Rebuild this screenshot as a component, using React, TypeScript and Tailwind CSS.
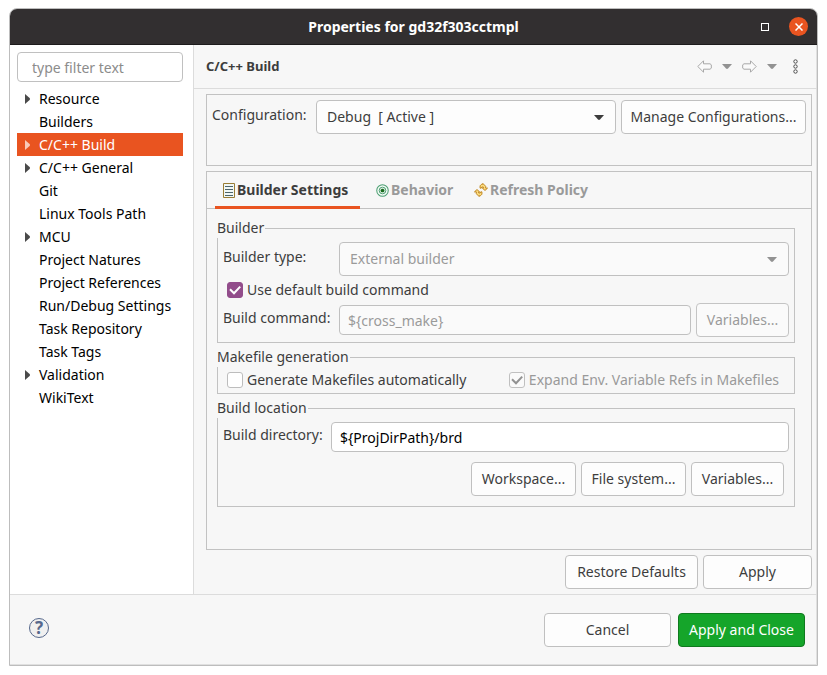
import { useState, type ReactNode } from 'react';
import { clsx } from 'clsx';

const pages = [
  { name: 'Resource', nested: true },
  { name: 'Builders' },
  { name: 'C/C++ Build', nested: true },
  { name: 'C/C++ General', nested: true },
  { name: 'Git' },
  { name: 'Linux Tools Path' },
  { name: 'MCU', nested: true },
  { name: 'Project Natures' },
  { name: 'Project References' },
  { name: 'Run/Debug Settings' },
  { name: 'Task Repository' },
  { name: 'Task Tags' },
  { name: 'Validation', nested: true },
  { name: 'WikiText' },
];

function Caret({ className }: { className?: string }) {
  return (
    <svg viewBox="0 0 10 5" className={clsx('h-[5px] w-[10px]', className)} fill="currentColor" aria-hidden="true">
      <path d="M0 0h10L6 4.6Q5 5.4 4 4.6z" />
    </svg>
  );
}

function Arrow({ forward }: { forward?: boolean }) {
  return (
    <svg viewBox="0 0 15 13" className={clsx('h-[13px] w-[15px]', forward && '-scale-x-100')} fill="#fafafa" stroke="#a8a8a8" aria-hidden="true">
      <path d="M.8 6.5 6.5.8v3H13l1.3 1v3.4l-1.3 1H6.5v3z" />
    </svg>
  );
}

function Button({ children, className, disabled }: { children: ReactNode; className?: string; disabled?: boolean }) {
  return (
    <button
      type="button"
      disabled={disabled}
      className={clsx(
        'h-[34px] shrink-0 rounded-[4px] border text-center whitespace-nowrap',
        disabled ? 'border-[#c4c4c4] bg-[#fafafa] text-[#9a9a9a]' : 'border-[#c0c0c0] bg-[#fdfdfd]',
        className,
      )}
    >
      {children}
    </button>
  );
}

function Combo({ id, value, disabled }: { id: string; value: string; disabled?: boolean }) {
  return (
    <div className="relative min-w-0 flex-1">
      <select
        id={id}
        disabled={disabled}
        className={clsx(
          'h-[34px] w-full appearance-none rounded-[4px] border border-[#c0c0c0] px-[10px] opacity-100',
          disabled ? 'bg-[#fafafa] text-[#9a9a9a]' : 'bg-[#fdfdfd] text-[#3d3d3d]',
        )}
      >
        <option>{value}</option>
      </select>
      <Caret className={clsx('pointer-events-none absolute top-[15px] right-3', disabled ? 'text-[#929292]' : 'text-[#3d3d3d]')} />
    </div>
  );
}

function Check({ label, initial = false, disabled }: { label: string; initial?: boolean; disabled?: boolean }) {
  const [on, setOn] = useState(initial);
  return (
    <label className={clsx('flex items-center gap-1 whitespace-nowrap', disabled && 'text-[#9a9a9a]')}>
      <span className="relative h-4 w-4 shrink-0">
        <input
          type="checkbox"
          checked={on}
          disabled={disabled}
          onChange={(e) => setOn(e.target.checked)}
          className={clsx(
            'block h-4 w-4 appearance-none rounded-[3px] border',
            disabled ? 'border-[#c0c0c0] bg-[#fafafa]' : on ? 'border-[#924d8b] bg-[#924d8b]' : 'border-[#bdbdbd] bg-white',
          )}
        />
        {on && (
          <svg viewBox="0 0 16 16" className={clsx('pointer-events-none absolute inset-0', disabled ? 'text-[#929292]' : 'text-white')} fill="none" stroke="currentColor" strokeWidth="2" aria-hidden="true">
            <path d="m3 7.2 4 4 6.2-6.6" />
          </svg>
        )}
      </span>
      {label}
    </label>
  );
}

function Group({ title, className, children }: { title: string; className?: string; children: ReactNode }) {
  return (
    <fieldset className={clsx('min-w-0 border border-[#c2c2c2] px-[5px]', className)}>
      <legend className="-ml-[6px] h-5 bg-[#f7f7f7] pr-px leading-5">{title}</legend>
      {children}
    </fieldset>
  );
}

function ListIcon() {
  return (
    <svg viewBox="0 0 12 15" className="h-[15px] w-3" aria-hidden="true">
      <path d="M.5.5h11v14H.5z" fill="#f1f7f5" stroke="#9a7d35" />
      <path d="M2 3.5h8M2 6.5h8M2 9.5h8M2 12.5h8" stroke="#4d646b" strokeWidth="1.2" />
    </svg>
  );
}

function TargetIcon() {
  return (
    <svg viewBox="0 0 14 14" className="h-[13px] w-[13px]" aria-hidden="true">
      <circle cx="7" cy="7" r="6.2" fill="#f2faf5" stroke="#4c9e72" strokeWidth="1.1" />
      <circle cx="7" cy="7" r="3.6" fill="#d8eadc" stroke="#4c9e72" />
      <circle cx="7" cy="7" r="2" fill="#176b1c" />
    </svg>
  );
}

function RefreshIcon() {
  return (
    <svg viewBox="0 0 15 15" className="h-[14px] w-[14px]" fill="#fbdc80" stroke="#bd8118" strokeLinejoin="round" aria-hidden="true">
      <path d="M6.5 5.5V3l1.7-1.7h1.3V.5l3 3v2h2L11.8 8 9 5.5h1V4.3H8.5L7.8 5.5z" />
      <path d="M6.5 5.5V3l1.7-1.7h1.3V.5l3 3v2h2L11.8 8 9 5.5h1V4.3H8.5L7.8 5.5z" transform="rotate(180 7.5 7.5)" />
    </svg>
  );
}

const tabs = [
  { name: 'Builder Settings', icon: <ListIcon />, width: 'w-[145px]' },
  { name: 'Behavior', icon: <TargetIcon />, width: 'w-[90px]' },
  { name: 'Refresh Policy', icon: <RefreshIcon />, width: 'w-[131px]' },
];

export default function App() {
  const [page, setPage] = useState('C/C++ Build');
  return (
    <div className="flex min-h-screen bg-white pt-2 pr-[9px] pb-[9px] pl-[9px] font-['Noto_Sans','Open_Sans',sans-serif] text-[14px] leading-5 text-[#3d3d3d]">
      <div className="flex min-w-0 flex-1 flex-col overflow-hidden rounded-t-[8px] border border-[#bdbdbd] bg-[#f7f7f7] shadow-[inset_-1px_-1px_0_#e0e0e0]">
        <header className="grid h-9 shrink-0 grid-cols-[1fr_auto_1fr] items-center border-b border-[#1d1b1c] bg-[#322f30] text-white">
          <h1 className="col-start-2 font-bold">Properties for gd32f303cctmpl</h1>
          <div className="flex items-center justify-end gap-5 pr-[9px]">
            <button type="button" aria-label="Maximize" className="h-2 w-2 border border-white" />
            <button type="button" aria-label="Close" className="flex h-[19px] w-[19px] items-center justify-center rounded-full bg-[#e95420]">
              <svg viewBox="0 0 8 8" className="h-2 w-2" stroke="white" strokeWidth="1.5" aria-hidden="true">
                <path d="m.5.5 7 7m0-7-7 7" />
              </svg>
            </button>
          </div>
        </header>

        <div className="flex flex-1">
          <nav className="w-[184px] shrink-0 border-r border-[#dcdcdc] bg-white pt-[7px] pr-[10px] pl-[7px]">
            <input
              type="search"
              aria-label="Filter"
              placeholder="type filter text"
              className="block h-[30px] w-full rounded-[4px] border border-[#c0c0c0] px-[14px] placeholder:text-[#8c8c8c]"
            />
            <ul className="mt-[5px] text-black">
              {pages.map(({ name, nested }) => (
                <li key={name}>
                  <button
                    type="button"
                    onClick={() => setPage(name)}
                    className={clsx('flex h-[23px] w-full items-center text-left whitespace-nowrap', name === page && 'bg-[#e95420] text-white')}
                  >
                    <span className="w-[22px] shrink-0 pl-2">
                      {nested && (
                        <svg viewBox="0 0 5 10" className={clsx('h-[10px] w-[5px]', name === page ? 'text-[#f9c9b7]' : 'text-[#4a4a4a]')} fill="currentColor" aria-hidden="true">
                          <path d="M0 0v10l4.6-4Q5.4 5 4.6 4z" />
                        </svg>
                      )}
                    </span>
                    {name}
                  </button>
                </li>
              ))}
            </ul>
          </nav>

          <main className="flex min-w-0 flex-1 flex-col">
            <div className="flex h-11 shrink-0 items-center justify-between border-b border-[#dcdcdc] pr-[19px] pl-3">
              <h2 className="pb-0.5 text-[13px] font-bold">C/C++ Build</h2>
              <div className="flex items-center gap-[10px] text-[#929292]">
                <button type="button" aria-label="Back"><Arrow /></button>
                <button type="button" aria-label="Back history"><Caret /></button>
                <button type="button" aria-label="Forward"><Arrow forward /></button>
                <button type="button" aria-label="Forward history"><Caret /></button>
                <button type="button" aria-label="View menu" className="pl-[6px]">
                  <svg viewBox="0 0 5 15" className="h-[15px] w-[5px]" fill="white" stroke="#4a4a4a" aria-hidden="true">
                    <circle cx="2.5" cy="2.5" r="1.7" />
                    <circle cx="2.5" cy="7.5" r="1.7" />
                    <circle cx="2.5" cy="12.5" r="1.7" />
                  </svg>
                </button>
              </div>
            </div>

            <div className="flex flex-1 flex-col gap-[5px] pt-[5px] pr-[5px] pb-[5px] pl-3">
              <section className="flex h-[72px] gap-[5px] border border-[#c2c2c2] p-[5px]">
                <label htmlFor="configuration" className="w-[99px] shrink-0 leading-[30px]">Configuration:</label>
                <Combo id="configuration" value={'Debug \u00a0[ Active ]'} />
                <Button className="w-[185px]">Manage Configurations...</Button>
              </section>

              <section className="flex flex-1 flex-col border border-[#c2c2c2] pb-10">
                <div role="tablist" className="flex h-[37px] shrink-0 gap-2 border-b border-[#c2c2c2] px-2 font-bold">
                  {tabs.map(({ name, icon, width }, i) => (
                    <button
                      key={name}
                      type="button"
                      role="tab"
                      aria-selected={i === 0}
                      className={clsx(
                        '-mb-px flex items-center gap-[2px] border-b-3 pt-0.5 pl-2 whitespace-nowrap',
                        width,
                        i === 0 ? 'border-[#e95420]' : 'border-transparent text-[#9a9a9a]',
                      )}
                    >
                      {icon}
                      {name}
                    </button>
                  ))}
                </div>

                <div className="flex flex-col gap-1 pt-[9px] pr-4 pl-[10px]">
                  <Group title="Builder" className="pb-[5px]">
                    <div className="flex pt-1">
                      <label htmlFor="builder-type" className="w-[116px] shrink-0 leading-[30px]">Builder type:</label>
                      <Combo id="builder-type" value="External builder" disabled />
                    </div>
                    <div className="flex h-[27px] items-center pl-1">
                      <Check label="Use default build command" initial />
                    </div>
                    <div className="flex items-center">
                      <label htmlFor="build-command" className="w-[116px] shrink-0 self-start leading-[30px]">Build command:</label>
                      <input
                        id="build-command"
                        disabled
                        defaultValue="${cross_make}"
                        className="mr-[5px] h-[30px] min-w-0 flex-1 rounded-[4px] border border-[#c0c0c0] bg-[#fafafa] px-2 text-[#9a9a9a]"
                      />
                      <Button disabled className="w-[93px]">Variables...</Button>
                    </div>
                  </Group>

                  <Group title="Makefile generation">
                    <div className="flex h-[26px] items-center justify-between pr-[10px] pl-1">
                      <Check label="Generate Makefiles automatically" />
                      <Check label="Expand Env. Variable Refs in Makefiles" initial disabled />
                    </div>
                  </Group>

                  <Group title="Build location" className="pb-[10px]">
                    <div className="flex pt-1">
                      <label htmlFor="build-directory" className="w-[108px] shrink-0 leading-[26px]">Build directory:</label>
                      <input
                        id="build-directory"
                        defaultValue="${ProjDirPath}/brd"
                        className="h-[30px] min-w-0 flex-1 rounded-[4px] border border-[#c0c0c0] bg-white px-2 text-black"
                      />
                    </div>
                    <div className="flex justify-end gap-[5px] pt-[10px] pr-[5px]">
                      <Button className="w-[105px]">Workspace...</Button>
                      <Button className="w-[105px]">File system...</Button>
                      <Button className="w-[93px]">Variables...</Button>
                    </div>
                  </Group>
                </div>
              </section>

              <div className="flex justify-end gap-[5px]">
                <Button className="w-[133px]">Restore Defaults</Button>
                <Button className="w-[109px]">Apply</Button>
              </div>
            </div>
          </main>
        </div>

        <footer className="flex shrink-0 items-center gap-[7px] border-t border-[#dcdcdc] py-[18px] pr-3 pl-[19px]">
          <button type="button" aria-label="Help" className="mr-auto mb-1 flex h-5 w-5 items-center justify-center rounded-full border border-[#56688c] bg-[#f0f0f0] text-[17px] leading-5 font-bold text-[#56688c]">
            ?
          </button>
          <Button className="w-[127px]">Cancel</Button>
          <button type="button" className="h-[34px] w-[127px] rounded-[4px] border border-[#0f7a1e] bg-[#15a52a] text-center whitespace-nowrap text-white">
            Apply and Close
          </button>
        </footer>
      </div>
    </div>
  );
}
